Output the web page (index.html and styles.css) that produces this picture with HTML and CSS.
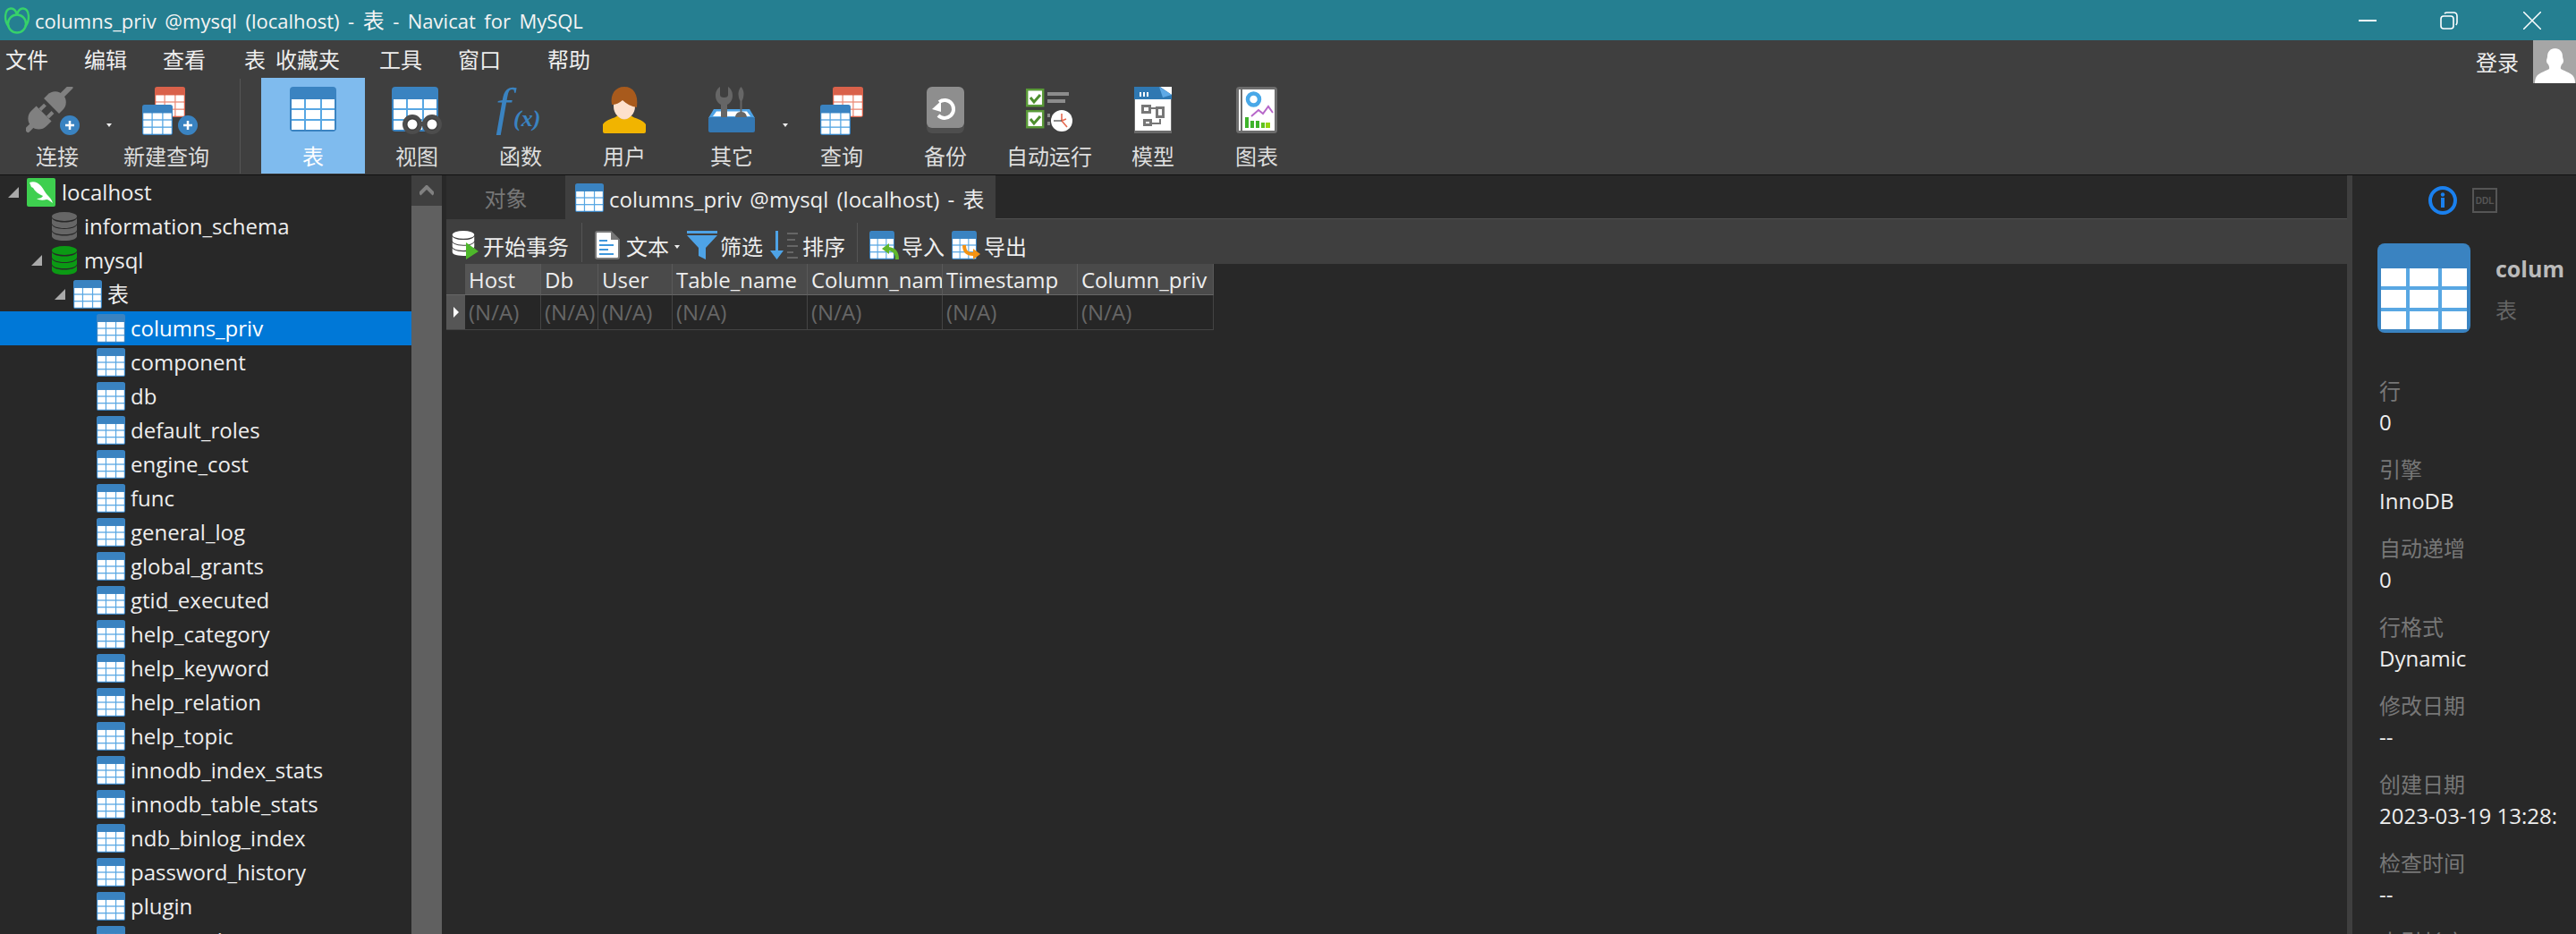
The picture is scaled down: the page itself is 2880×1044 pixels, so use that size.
FILE: index.html
```html
<!DOCTYPE html>
<html lang="zh">
<head>
<meta charset="utf-8">
<title>Navicat for MySQL</title>
<link rel="stylesheet" href="styles.css">
</head>
<body>
<svg class="defs" width="0" height="0">
  <symbol id="tbl" viewBox="0 0 104 100" preserveAspectRatio="none">
    <rect width="104" height="100" rx="8" fill="#3a83c1"/>
    <rect x="4" y="28" width="96" height="68" fill="#58a7e3"/>
    <g fill="#fff">
      <rect x="4" y="28" width="28" height="20"/><rect x="36" y="28" width="32" height="20"/><rect x="72" y="28" width="28" height="20"/>
      <rect x="4" y="52" width="28" height="20"/><rect x="36" y="52" width="32" height="20"/><rect x="72" y="52" width="28" height="20"/>
      <rect x="4" y="76" width="28" height="20"/><rect x="36" y="76" width="32" height="20"/><rect x="72" y="76" width="28" height="20"/>
    </g>
  </symbol>
  <symbol id="tbl-o" viewBox="0 0 104 100" preserveAspectRatio="none">
    <rect width="104" height="100" rx="8" fill="#d9614a"/>
    <rect x="4" y="28" width="96" height="68" fill="#ec8f7c"/>
    <g fill="#fff">
      <rect x="4" y="28" width="28" height="20"/><rect x="36" y="28" width="32" height="20"/><rect x="72" y="28" width="28" height="20"/>
      <rect x="4" y="52" width="28" height="20"/><rect x="36" y="52" width="32" height="20"/><rect x="72" y="52" width="28" height="20"/>
      <rect x="4" y="76" width="28" height="20"/><rect x="36" y="76" width="32" height="20"/><rect x="72" y="76" width="28" height="20"/>
    </g>
  </symbol>
  <symbol id="db" viewBox="0 0 28 32">
    <ellipse cx="14" cy="5" rx="14" ry="5" fill="currentColor"/>
    <path d="M0 7c2 3 7 4.500 14 4.500S26 10 28 7v5.500c0 3-6 5.500-14 5.500S0 15.500 0 12.500z" fill="currentColor"/>
    <path d="M0 14.500c2 3 7 4.500 14 4.500s12-1.500 14-4.500V20c0 3-6 5-14 5S0 23 0 20z" fill="currentColor"/>
    <path d="M0 22c2 3 7 4.500 14 4.500S26 25 28 22v5c0 3-6 5-14 5S0 30 0 27z" fill="currentColor"/>
  </symbol>
</svg>

<header class="titlebar">
  <svg class="logo" viewBox="0 0 30 30" width="30" height="30" fill="none" stroke="#37d26a" stroke-width="2.400">
    <circle cx="15" cy="18.500" r="10"/>
    <path d="M6 22C0 15 1 2 8 1.500c4-.3 6 3 7 7 1-4 3-7.300 7-7 7 .5 8 13.500 2 20.500"/>
  </svg>
  <span class="title">columns_priv @mysql (localhost) - <span class="zh">表</span> - Navicat for MySQL</span>
  <div class="winbtns">
    <svg class="win-min" width="20" height="2"><rect width="20" height="2" fill="#fff"/></svg>
    <svg class="win-max" width="20" height="20" viewBox="0 0 20 20" fill="none" stroke="#fff" stroke-width="1.600"><rect x="1" y="5" width="14" height="14" rx="3"/><path d="M5 2.200C6 1 7 1 8 1h7c2.500 0 4 1.500 4 4v7c0 1-.3 2-1.200 3"/></svg>
    <svg class="win-close" width="20" height="20" viewBox="0 0 20 20" stroke="#fff" stroke-width="1.500"><path d="M0 0l20 20M20 0L0 20"/></svg>
  </div>
</header>

<nav class="menubar">
  <span class="m m1">文件</span><span class="m m2">编辑</span><span class="m m3">查看</span><span class="m m4">表</span><span class="m m5">收藏夹</span><span class="m m6">工具</span><span class="m m7">窗口</span><span class="m m8">帮助</span>
  <span class="login">登录</span>
  <div class="avatar">
    <svg viewBox="0 0 48 48" width="48" height="48"><path fill="#fff" d="M24 9c6 0 9 4 9 9 0 2 1 3 1 5 0 2-1 3-2 4-1 2-1.500 4-1 5 3 2 10 4 13 7 2 2 3 5 3 9H2c0-4 1-7 3-9 3-3 10-5 13-7 .5-1 0-3-1-5-1-1-2-2-2-4 0-2 1-3 1-5 0-5 3-9 9-9z"/></svg>
  </div>
</nav>

<section class="toolbar">
  <div class="tool t-first">
    <div class="ticon">
      <svg width="68" height="54" viewBox="0 0 68 54">
        <g transform="rotate(-45 25 25)" fill="#808080">
          <rect x="-10" y="22" width="16" height="6" rx="2"/>
          <path d="M18 13h-8a12 12 0 0 0 0 24h8z"/>
          <rect x="18" y="17" width="8" height="4"/><rect x="18" y="29" width="8" height="4"/>
          <path d="M30 13h6a12 12 0 0 1 0 24h-6z"/>
          <rect x="46" y="22" width="16" height="6" rx="2"/>
        </g>
        <circle cx="49" cy="43" r="11" fill="#3a83c1"/><path d="M44 43h10M49 38v10" stroke="#fff" stroke-width="2.500"/>
      </svg>
    </div>
    <span class="tlabel">连接</span>
    <span class="drop"></span>
  </div>
  <div class="tool t-new">
    <div class="ticon">
      <svg width="62" height="54" viewBox="0 0 62 54">
        <use href="#tbl-o" x="14" y="0" width="34" height="34"/>
        <use href="#tbl" x="0" y="20" width="34" height="34"/>
        <circle cx="51" cy="43" r="11" fill="#3a83c1"/><path d="M46 43h10M51 38v10" stroke="#fff" stroke-width="2.500"/>
      </svg>
    </div>
    <span class="tlabel">新建查询</span>
  </div>
  <div class="tdivider"></div>
  <div class="tool active">
    <div class="ticon"><svg width="52" height="50"><use href="#tbl" width="52" height="50"/></svg></div>
    <span class="tlabel">表</span>
  </div>
  <div class="tool">
    <div class="ticon">
      <svg width="56" height="54" viewBox="0 0 56 54">
        <use href="#tbl" x="0" y="0" width="52" height="50"/>
        <g fill="#3f3f3f" stroke="#4d4d4d" stroke-width="4"><circle cx="23" cy="42" r="9"/><circle cx="45" cy="42" r="9"/></g>
        <g fill="#fff"><circle cx="23" cy="42" r="5.500"/><circle cx="45" cy="42" r="5.500"/></g>
        <rect x="30" y="39" width="8" height="5" fill="#4d4d4d"/>
      </svg>
    </div>
    <span class="tlabel">视图</span>
  </div>
  <div class="tool">
    <div class="ticon">
      <svg width="60" height="54" viewBox="0 0 60 54">
        <text class="fx-f" x="2" y="42">f</text><text class="fx-x" x="22" y="44">(x)</text>
      </svg>
    </div>
    <span class="tlabel">函数</span>
  </div>
  <div class="tool">
    <div class="ticon">
      <svg width="48" height="52" viewBox="0 0 48 52">
        <path fill="#ecc9ae" d="M18 30h12v10H18z"/>
        <path fill="#f1b400" d="M0 42c4-6 12-6 17-10 3 6 11 6 14 0 5 4 13 4 17 10v8q0 2-2 2H2q-2 0-2-2z"/>
        <path fill="#fde1cd" d="M12 14h24v8c0 8-6 14-12 14s-12-6-12-14z"/>
        <path fill="#a85a1c" d="M10 20C8 8 14 0 24 0s16 8 14 23c-6-1-12-4-16-8-3 3-8 5-12 5z"/>
      </svg>
    </div>
    <span class="tlabel">用户</span>
  </div>
  <div class="tool t-other">
    <div class="ticon">
      <svg width="52" height="51" viewBox="0 0 52 51">
        <path fill="#4ea3e6" d="M6 25h40l6 10H0z"/>
        <path fill="#fff" d="M9 27.500h34l4 5.500H5z"/>
        <rect y="34" width="52" height="17" rx="2" fill="#3478b3"/>
        <path fill="#666" d="M14 34V20c-4-2-6-6-6-10 0-5 2-8 5-10v9c0 2 1.500 3 4.500 3s4.500-1 4.500-3V0c3 2 5 5 5 10 0 4-2 8-6 10v14z"/>
        <path fill="#666" d="M36.500 0c2 2 3 5 3 8s-1 6-2 8v12c3 .5 5 2 5.500 6H30c.5-4 2.500-5.500 5.500-6V16c-1-2-2-5-2-8s1-6 3-8z"/>
      </svg>
    </div>
    <span class="tlabel">其它</span>
    <span class="drop"></span>
  </div>
  <div class="tool">
    <div class="ticon">
      <svg width="48" height="54" viewBox="0 0 48 54">
        <use href="#tbl-o" x="14" y="0" width="34" height="34"/>
        <use href="#tbl" x="0" y="20" width="34" height="34"/>
      </svg>
    </div>
    <span class="tlabel">查询</span>
  </div>
  <div class="tool">
    <div class="ticon">
      <svg width="42" height="52" viewBox="0 0 42 52">
        <rect y="6" width="42" height="46" rx="6" fill="#4e4e4e"/>
        <rect width="42" height="46" rx="6" fill="#8e8e8e"/>
        <path d="M14 17A10 10 0 1 1 13 32" fill="none" stroke="#fff" stroke-width="4"/>
        <path fill="#fff" d="M6 25l10-9v12z"/>
      </svg>
    </div>
    <span class="tlabel">备份</span>
  </div>
  <div class="tool">
    <div class="ticon">
      <svg width="52" height="50" viewBox="0 0 52 50">
        <rect x="1.200" y="3.200" width="18" height="18" fill="#fff" stroke="#5a9a38" stroke-width="2.500"/>
        <rect x="1.200" y="27.200" width="18" height="18" fill="#fff" stroke="#5a9a38" stroke-width="2.500"/>
        <path d="M5 12l4 5 7-8M5 36l4 5 7-8" fill="none" stroke="#4e8f2e" stroke-width="3"/>
        <path fill="#8c8c8c" d="M24 6h24v4H24zM24 14h20v4H24zM24 30h3v4h-3zM24 39h3v4h-3z"/>
        <circle cx="40" cy="38" r="12" fill="#fff"/>
        <path d="M40 30v8l6 7M40 38l5-2" fill="none" stroke="#e66a50" stroke-width="1.600"/>
        <path d="M40 38h-9" stroke="#444" stroke-width="1.200"/>
      </svg>
    </div>
    <span class="tlabel">自动运行</span>
  </div>
  <div class="tool">
    <div class="ticon">
      <svg width="42" height="52" viewBox="0 0 42 52">
        <path fill="#fff" d="M0 0h42v52H0z"/>
        <path fill="#6b6b6b" d="M0 10h1v42H0zM41 10h1v42h-1zM0 49h42v3H0z"/>
        <path fill="#2f78b2" d="M0 0h29l13 9v5H0z"/>
        <path fill="#5ea9e6" d="M28 0l14 9-10 3z"/>
        <path fill="#fff" d="M6 6h2v5H6zM10 6h2v5h-2zM14 6h2v5h-2z"/>
        <path d="M19 24h6M29 36v5h-9" fill="none" stroke="#777" stroke-width="2"/>
        <g fill="#fff" stroke="#777" stroke-width="3"><rect x="9.500" y="21.500" width="8" height="7"/><rect x="25.500" y="23.500" width="7" height="10"/><rect x="11.500" y="37.500" width="7" height="5"/></g>
      </svg>
    </div>
    <span class="tlabel">模型</span>
  </div>
  <div class="tool">
    <div class="ticon">
      <svg width="46" height="52" viewBox="0 0 46 52">
        <rect x="1.500" y="1.500" width="43" height="49" rx="2" fill="#fff" stroke="#6d6d6d" stroke-width="3"/>
        <rect x="5" y="2" width="2" height="48" fill="#6d6d6d"/>
        <circle cx="19.500" cy="14" r="6.500" fill="none" stroke="#49a8e8" stroke-width="4.500"/>
        <path d="M17 33l8-7 5 4 6-8 5 7" fill="none" stroke="#b767c9" stroke-width="2"/>
        <path fill="#3eb32b" d="M10 34h4v12h-4zM16 38h4v8h-4zM22 38h4v8h-4z"/>
        <path fill="#61c220" d="M28 40h4v6h-4z"/>
        <path fill="#95d30f" d="M33 40h5v6h-5z"/>
      </svg>
    </div>
    <span class="tlabel">图表</span>
  </div>
</section>

<main class="main">
  <aside class="tree">
    <div class="tree-list">
      <div class="row l0"><span class="tri"></span><svg class="ic32" viewBox="0 0 32 32"><rect width="32" height="32" rx="2" fill="#3ecf4f"/><path fill="#fff" d="M3 5c5-2 9 0 12 3 4 4 5 8 8 11 2 2 5 5 6 9-3-2-5-4-7-4-4 1-8 1-11-1 4 0 6-1 7-3-5-2-9-5-11-9L5 10z"/></svg><span class="name">localhost</span></div>
      <div class="row l1 noarrow"><svg class="ic28 dbg" viewBox="0 0 28 32"><use href="#db"/></svg><span class="name">information_schema</span></div>
      <div class="row l1b"><span class="tri"></span><svg class="ic28 dbn" viewBox="0 0 28 32"><use href="#db"/></svg><span class="name">mysql</span></div>
      <div class="row l2"><span class="tri"></span><svg class="ic32" viewBox="0 0 32 32"><use href="#tbl" width="32" height="32"/></svg><span class="name">表</span></div>
      <div class="row l3 sel"><svg class="ic32"><use href="#tbl" width="32" height="32"/></svg><span class="name">columns_priv</span></div>
      <div class="row l3"><svg class="ic32"><use href="#tbl" width="32" height="32"/></svg><span class="name">component</span></div>
      <div class="row l3"><svg class="ic32"><use href="#tbl" width="32" height="32"/></svg><span class="name">db</span></div>
      <div class="row l3"><svg class="ic32"><use href="#tbl" width="32" height="32"/></svg><span class="name">default_roles</span></div>
      <div class="row l3"><svg class="ic32"><use href="#tbl" width="32" height="32"/></svg><span class="name">engine_cost</span></div>
      <div class="row l3"><svg class="ic32"><use href="#tbl" width="32" height="32"/></svg><span class="name">func</span></div>
      <div class="row l3"><svg class="ic32"><use href="#tbl" width="32" height="32"/></svg><span class="name">general_log</span></div>
      <div class="row l3"><svg class="ic32"><use href="#tbl" width="32" height="32"/></svg><span class="name">global_grants</span></div>
      <div class="row l3"><svg class="ic32"><use href="#tbl" width="32" height="32"/></svg><span class="name">gtid_executed</span></div>
      <div class="row l3"><svg class="ic32"><use href="#tbl" width="32" height="32"/></svg><span class="name">help_category</span></div>
      <div class="row l3"><svg class="ic32"><use href="#tbl" width="32" height="32"/></svg><span class="name">help_keyword</span></div>
      <div class="row l3"><svg class="ic32"><use href="#tbl" width="32" height="32"/></svg><span class="name">help_relation</span></div>
      <div class="row l3"><svg class="ic32"><use href="#tbl" width="32" height="32"/></svg><span class="name">help_topic</span></div>
      <div class="row l3"><svg class="ic32"><use href="#tbl" width="32" height="32"/></svg><span class="name">innodb_index_stats</span></div>
      <div class="row l3"><svg class="ic32"><use href="#tbl" width="32" height="32"/></svg><span class="name">innodb_table_stats</span></div>
      <div class="row l3"><svg class="ic32"><use href="#tbl" width="32" height="32"/></svg><span class="name">ndb_binlog_index</span></div>
      <div class="row l3"><svg class="ic32"><use href="#tbl" width="32" height="32"/></svg><span class="name">password_history</span></div>
      <div class="row l3"><svg class="ic32"><use href="#tbl" width="32" height="32"/></svg><span class="name">plugin</span></div>
      <div class="row l3"><svg class="ic32"><use href="#tbl" width="32" height="32"/></svg><span class="name">procs_priv</span></div>
    </div>
    <div class="scrollbar">
      <div class="sb-up"><svg width="16" height="12" viewBox="0 0 16 12"><path d="M0 10l8-8 8 8" fill="none" stroke="#808080" stroke-width="4"/></svg></div>
      <div class="sb-thumb"></div>
    </div>
  </aside>

  <section class="content">
    <div class="tabs">
      <div class="tab tab-obj">对象</div>
      <div class="tab tab-on"><svg class="ic32" viewBox="0 0 32 32"><use href="#tbl" width="32" height="32"/></svg><span>columns_priv @mysql (localhost) - 表</span></div>
    </div>
    <div class="gridbar">
      <svg class="g-tx" width="30" height="32" viewBox="0 0 30 32">
        <g color="#fff"><use href="#db" width="26" height="28"/></g>
        <path fill="#4eb82b" d="M16 13l14 10-14 9z"/>
      </svg>
      <span class="g-l l-tx">开始事务</span>
      <span class="g-div d1"></span>
      <svg class="g-doc" width="28" height="32" viewBox="0 0 28 32">
        <path fill="#fff" stroke="#777" stroke-width="2" d="M3 1h15l9 9v19a2 2 0 0 1-2 2H3a2 2 0 0 1-2-2V3a2 2 0 0 1 2-2z"/>
        <path fill="#777" d="M18 1l9 9h-9z"/>
        <path fill="#3f97dc" d="M5 10h9v2H5zM5 15h16v2H5zM5 20h10v2H5zM5 25h16v2H5z"/>
      </svg>
      <span class="g-l l-txt">文本</span>
      <span class="drop g-drop"></span>
      <svg class="g-fil" width="34" height="32" viewBox="0 0 34 32"><path fill="#4ea3e6" d="M0 0h34v3H0zM0 5h34L21 19v13l-8-4v-9z"/></svg>
      <span class="g-l l-fil">筛选</span>
      <svg class="g-sort" width="34" height="32" viewBox="0 0 34 32">
        <path fill="#4ea3e6" d="M7 0h3v22h6l-7.500 10L1 22h6z"/>
        <path fill="#666" d="M20 2h12v2H20zM20 9h9v2h-9zM20 16h12v2H20zM20 23h7v2h-7zM20 29h12v2H20z"/>
      </svg>
      <span class="g-l l-sort">排序</span>
      <span class="g-div d2"></span>
      <svg class="g-imp" width="33" height="32" viewBox="0 0 33 32">
        <use href="#tbl" width="28" height="32"/>
        <path d="M31 32c0-8-4-12-11-12" fill="none" stroke="#5fb72b" stroke-width="4"/><path fill="#5fb72b" d="M14 20l8-6v12z"/>
      </svg>
      <span class="g-l l-imp">导入</span>
      <svg class="g-exp" width="33" height="32" viewBox="0 0 33 32">
        <use href="#tbl" width="28" height="32"/>
        <path d="M14 16c0 8 4 10 10 10" fill="none" stroke="#f39314" stroke-width="4"/><path fill="#f39314" d="M32 26l-8-6v12z"/>
      </svg>
      <span class="g-l l-exp">导出</span>
    </div>
    <div class="grid">
      <div class="gh gh-corner"></div>
      <div class="gh gh-host">Host</div><div class="gh">Db</div><div class="gh">User</div><div class="gh">Table_name</div><div class="gh">Column_name</div><div class="gh">Timestamp</div><div class="gh">Column_priv</div>
      <div class="gi"><span class="gi-arrow"></span></div>
      <div class="gc">(N/A)</div><div class="gc">(N/A)</div><div class="gc">(N/A)</div><div class="gc">(N/A)</div><div class="gc">(N/A)</div><div class="gc">(N/A)</div><div class="gc">(N/A)</div>
    </div>
  </section>

  <div class="splitter"></div>

  <aside class="props">
    <div class="p-tabs">
      <svg width="32" height="32" viewBox="0 0 32 32"><circle cx="16" cy="16" r="14" fill="none" stroke="#1a80ee" stroke-width="4"/><rect x="14" y="13" width="4" height="11" fill="#1a80ee"/><circle cx="16" cy="9.500" r="2.200" fill="#1a80ee"/></svg>
      <span class="ddl">DDL</span>
    </div>
    <div class="p-head">
      <svg width="104" height="100"><use href="#tbl" width="104" height="100"/></svg>
      <div class="p-name"><b>colum</b><span>表</span></div>
    </div>
    <dl class="p-list">
      <dt>行</dt><dd>0</dd>
      <dt>引擎</dt><dd>InnoDB</dd>
      <dt>自动递增</dt><dd>0</dd>
      <dt>行格式</dt><dd>Dynamic</dd>
      <dt>修改日期</dt><dd>--</dd>
      <dt>创建日期</dt><dd>2023-03-19 13:28:</dd>
      <dt>检查时间</dt><dd>--</dd>
      <dt>索引长度</dt><dd>0</dd>
    </dl>
  </aside>
</main>
</body>
</html>
```

FILE: styles.css
```css
* { box-sizing: border-box; margin: 0; padding: 0; }
html, body { height: 100%; overflow: hidden; }
body {
  display: flex; flex-direction: column;
  background: #282828; color: #eee;
  font-family: "Open Sans", "Noto Sans CJK SC", sans-serif;
  font-size: 24px;
}
.defs { position: absolute; }
svg { display: block; flex: none; }

.titlebar { height: 45px; flex: none; background: #257f91; display: flex; align-items: center; padding-left: 4px; }
.logo { margin-right: 5px; }
.title { color: #f4f4f4; white-space: nowrap; line-height: 45px; font-size: 22px; word-spacing: 3.8px; }
.title .zh { font-size: 24px; }
.winbtns { margin-left: auto; display: flex; align-items: center; padding-right: 39px; }
.win-min { margin-right: 71px; }
.win-max { margin-right: 73px; }

.menubar { height: 42px; flex: none; background: #3f3f3f; display: flex; align-items: center; position: relative; padding-bottom: 2px; padding-left: 6px; white-space: nowrap; }
.m { color: #eee; }
.m2 { margin-left: 40px; } .m3 { margin-left: 40px; } .m4 { margin-left: 43px; } .m5 { margin-left: 11px; }
.m6 { margin-left: 44px; } .m7 { margin-left: 40px; } .m8 { margin-left: 52px; }
.login { margin-left: auto; margin-right: 64px; margin-top: 6px; }
.avatar { position: absolute; right: 0; top: 0; width: 48px; height: 48px; background: #a6a6a6; }

.toolbar { height: 109px; flex: none; background: #3f3f3f; border-bottom: 1px solid #111; display: flex; align-items: flex-start; }
.tool { width: 116px; height: 107px; display: flex; flex-direction: column; align-items: center; position: relative; color: #ddd; }
.ticon { height: 72px; padding-top: 10px; flex: none; }
.tlabel { line-height: 32px; white-space: nowrap; }
.t-first { margin-left: 6px; }
.t-first .ticon { transform: translateX(-1px); }
.t-new { margin-left: 6px; }
.t-new .ticon { padding-left: 8px; }
.tdivider { width: 1px; height: 106px; background: #555; margin: 1px 23px 0 24px; }
.active { background: #7fbbee; }
.active .tlabel { color: #fff; }
.t-other { margin: 0 7px 0 4px; }
.drop { width: 0; height: 0; border: 3px solid transparent; border-top: 4px solid #eee; border-bottom: 0; }
.tool .drop { position: absolute; top: 51px; right: -3px; }
.t-other .drop { right: -5px; }
.fx-f { font: italic 60px "Liberation Serif", serif; fill: #3a83c1; }
.fx-x { font: italic bold 26px "Liberation Serif", serif; fill: #3a83c1; }

.main { flex: 1; min-height: 0; display: flex; }
.tree { width: 499px; flex: none; display: flex; padding-right: 5px; }
.tree-list { width: 460px; flex: none; overflow: hidden; }
.row { height: 38px; display: flex; align-items: center; white-space: nowrap; color: #eee; }
.tri { width: 0; height: 0; border-style: solid; border-width: 0 0 12px 12px; border-color: transparent transparent #aaa transparent; flex: none; }
.name { line-height: 38px; }
.ic32 { width: 32px; height: 32px; }
.ic28 { width: 28px; height: 32px; }
.dbg { color: #666; }
.dbn { color: #0b9a14; }
.l0 { padding-left: 9px; }
.l0 .tri { margin-right: 9px; } .l0 .name { margin-left: 7px; }
.l1 { padding-left: 58px; }
.l1 .name, .l1b .name { margin-left: 8px; }
.l1b { padding-left: 35px; }
.l1b .tri { margin-right: 11px; }
.l2 { padding-left: 61px; }
.l2 .tri { margin-right: 9px; } .l2 .name { margin-left: 6px; }
.l3 { padding-left: 108px; }
.l3 .name { margin-left: 6px; }
.sel { background: #0078d7; color: #fff; }
.scrollbar { width: 34px; flex: none; background: #606060; }
.sb-up { height: 34px; background: #3f3f3f; display: flex; align-items: center; justify-content: center; }

.content { flex: 1; min-width: 0; display: flex; flex-direction: column; }
.tabs { height: 49px; flex: none; display: flex; border-bottom: 1px solid #505050; }
.tab { display: flex; align-items: center; white-space: nowrap; height: 49px; }
.tab-obj { width: 134px; justify-content: center; background: #2e2e2e; color: #777; border-right: 1px solid #3f3f3f; }
.tab-on { width: 480px; background: #3f3f3f; color: #eee; padding-left: 10px; gap: 6px; height: 50px; word-spacing: 3px; }
.gridbar { height: 50px; flex: none; background: #3f3f3f; display: flex; align-items: flex-start; padding-top: 13px; padding-left: 6px; }
.g-l { line-height: 36px; color: #eee; white-space: nowrap; }
.g-div { width: 1px; height: 44px; background: #555; margin-top: -11px; }
.l-tx { margin-left: 5px; }
.d1 { margin: -9px 14px 0 14px; }
.l-txt { margin-left: 7px; }
.g-drop { margin: 16px 0 0 6px; }
.g-fil { margin-left: 8px; }
.l-fil { margin-left: 3px; }
.g-sort { margin-left: 7px; }
.l-sort { margin-left: 3px; }
.d2 { margin: -9px 13px 0 13px; }
.l-imp { margin-left: 3px; }
.g-exp { margin-left: 8px; }
.l-exp { margin-left: 3px; }

.grid { display: grid; grid-template-columns: 21px 85px 64px 83px 151px 151px 151px 152px; grid-template-rows: 35px 39px; justify-content: start; }
.gh { background: #4a4a4a; border-right: 1px solid #5a5a5a; border-bottom: 1px solid #666; padding-left: 4px; line-height: 36px; color: #eee; overflow: hidden; white-space: nowrap; }
.gh-corner { background: #3f3f3f; border-right: 0; padding: 0; }
.gh-host { background: #555; }
.gi { background: #565656; display: flex; align-items: center; justify-content: center; border-bottom: 1px solid #444; }
.gi-arrow { width: 0; height: 0; border-left: 6px solid #fff; border-top: 6px solid transparent; border-bottom: 6px solid transparent; }
.gc { background: #262626; border-right: 1px solid #444; border-bottom: 1px solid #444; padding-left: 4px; line-height: 38px; color: #666; overflow: hidden; white-space: nowrap; }

.splitter { width: 6px; flex: none; background: #3f3f3f; }
.props { width: 250px; flex: none; overflow: hidden; background: #282828; white-space: nowrap; }
.p-tabs { height: 48px; display: flex; align-items: center; padding: 8px 0 0 85px; gap: 17px; }
.ddl { width: 28px; height: 28px; border: 2px solid #555; color: #555; font: bold 10px "Liberation Sans", sans-serif; display: flex; align-items: center; justify-content: center; }
.p-head { display: flex; padding: 28px 0 0 28px; gap: 28px; height: 176px; }
.p-name { display: flex; flex-direction: column; }
.p-name b { color: #bbb; font-size: 25px; line-height: 34px; margin-top: 11px; }
.p-name span { color: #666; line-height: 34px; margin-top: 13px; }
.p-list { padding-left: 30px; }
dt { color: #777; line-height: 34px; height: 35px; }
dd { color: #eee; line-height: 34px; height: 53px; }
```
